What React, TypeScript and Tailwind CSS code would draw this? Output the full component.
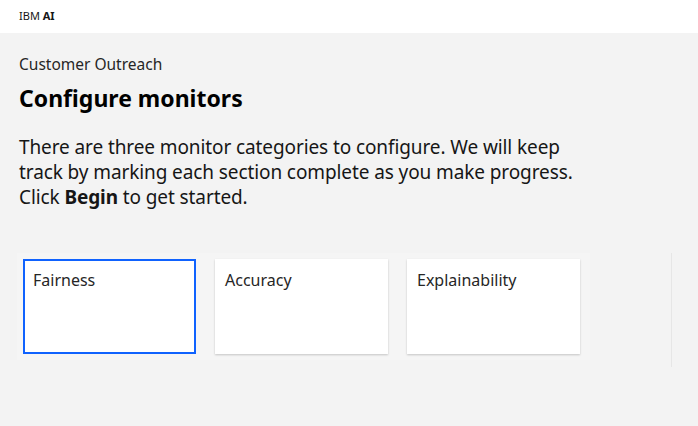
export default function App() {
  const cards = ["Fairness", "Accuracy", "Explainability"];

  return (
    <div className="flex h-[426px] w-[698px] flex-col overflow-hidden bg-[#f3f3f3] font-['Noto_Sans',sans-serif] text-[#161616]">
      {/* Top bar */}
      <header className="flex h-[33px] shrink-0 items-center bg-white px-[19px] text-[11px] text-[#161616]">
        <span>
          IBM <span className="font-bold">AI</span>
        </span>
      </header>

      <main className="flex-1 pt-[21px]">
        <div className="pl-[19px]">
          <p className="text-[15.5px] leading-[20px] text-[#262626]">Customer Outreach</p>
          <h1 className="mt-[9px] text-[23px] font-bold leading-[30px] text-[#000]">Configure monitors</h1>
          <p className="mt-[22px] text-[19px] leading-[25px] tracking-[-0.1px] text-[#161616]">
            There are three monitor categories to configure. We will keep
            <br />
            track by marking each section complete as you make progress.
            <br />
            Click <span className="font-bold">Begin</span> to get started.
          </p>
        </div>

        <div className="mt-[43px] flex items-start">
          <div className="ml-[17px] flex w-[573px] gap-[19px] bg-[#f5f5f5] px-[6px] py-[6px]">
            {cards.map((c, i) => (
              <div
                key={c}
                className={`h-[95px] w-[173px] bg-white ${
                  i === 0 ? "border-2 border-[#0f62fe] px-[8px] pt-[7px]" : "px-[10px] pt-[9px] shadow-[0_1px_2px_rgba(0,0,0,0.2)]"
                }`}
              >
                <span className="text-[16px] leading-[22px] text-[#262626]">{c}</span>
              </div>
            ))}
          </div>
          <div className="ml-[81px] h-[114px] w-px bg-[#e6e6e6]" />
        </div>
      </main>
    </div>
  );
}
